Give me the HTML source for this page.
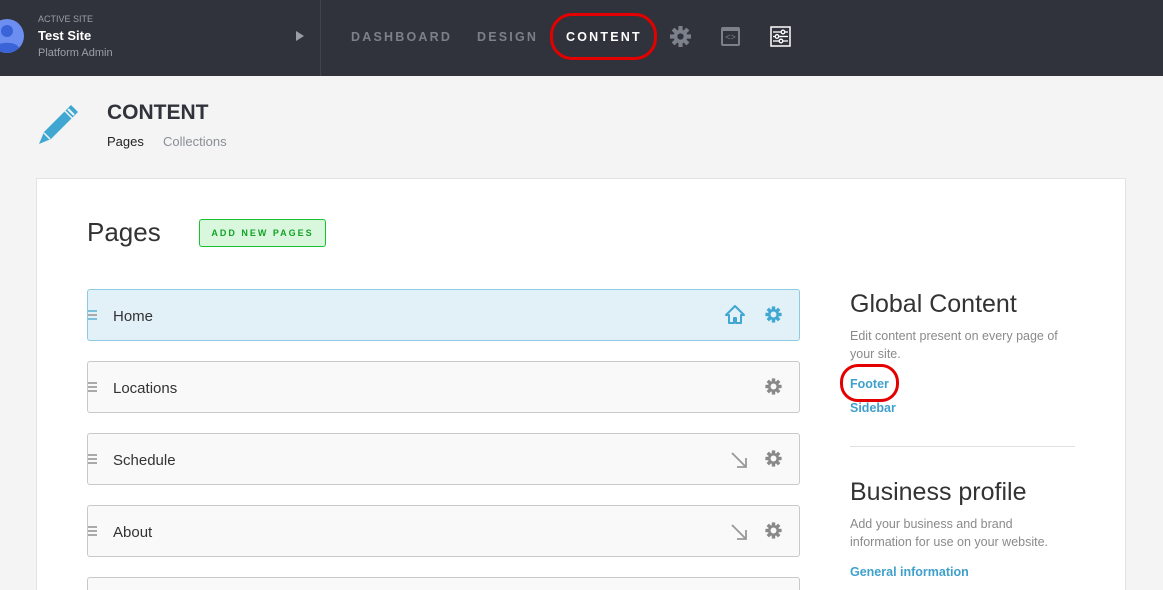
<!DOCTYPE html>
<html style="height:590px;overflow:hidden"><head><style>
*{box-sizing:border-box;margin:0;padding:0}
body{width:1163px;height:590px;overflow:hidden;background:#f4f4f4;font-family:"Liberation Sans",sans-serif;position:relative}
.hdr{position:absolute;left:0;top:0;width:1163px;height:76px;background:#30333b}
.abs{position:absolute}
.nav{position:absolute;top:30px;font-size:12.5px;font-weight:bold;letter-spacing:2.2px;color:#7c808a}
.panel{position:absolute;left:36px;top:178px;width:1090px;height:412px;background:#fff;border:1px solid #e3e3e3;border-bottom:none}
.row{position:absolute;left:87px;width:713px;height:52px;background:#f9f9f9;border:1px solid #c9c9c9;border-radius:3px}
.row .t{position:absolute;left:25px;top:18px;font-size:15px;color:#333}
.row .h{position:absolute;left:0;top:20px;width:9px;height:10px;border-top:2px solid #aaa;border-bottom:2px solid #aaa}
.row .h:after{content:"";position:absolute;left:0;top:2px;width:9px;border-top:2px solid #aaa}
.gear{position:absolute;left:677px;top:16px}
.arr{position:absolute;left:642px;top:17px}
.link{position:absolute;left:850px;font-size:12.5px;font-weight:bold;color:#3fa0cc}
.grey{color:#8a8a8a;font-size:12.5px;line-height:18px}
</style></head><body>
<div class="hdr">
 <svg class="abs" style="left:-10px;top:18px" width="34" height="36" viewBox="0 0 34 36"><circle cx="17" cy="18" r="17" fill="#6b8ef0"/><circle cx="17" cy="13" r="6" fill="#3b63d8"/><path d="M5 30c2-7 22-7 24 0a17 17 0 0 1-24 0z" fill="#3b63d8"/></svg>
 <div class="abs" style="left:38px;top:14px;font-size:9px;color:#9a9ea6">ACTIVE SITE</div>
 <div class="abs" style="left:38px;top:28px;font-size:13px;font-weight:bold;color:#fff">Test Site</div>
 <div class="abs" style="left:38px;top:47px;font-size:11px;color:#9a9ea6">Platform Admin</div>
 <div class="abs" style="left:296px;top:31px;width:0;height:0;border-left:8px solid #9a9ea6;border-top:5px solid transparent;border-bottom:5px solid transparent"></div>
 <div class="abs" style="left:320px;top:0;width:1px;height:76px;background:#40444c"></div>
 <div class="nav" style="left:351px">DASHBOARD</div>
 <div class="nav" style="left:477px">DESIGN</div>
 <div class="nav" style="left:566px;color:#fff">CONTENT</div>
 <div class="abs" style="left:550px;top:13px;width:107px;height:47px;border:3px solid #e50000;border-radius:22px"></div>
 <svg class="abs" style="left:670px;top:26px" width="21" height="21" viewBox="-10 -10 20 20"><g fill="#7c808a"><circle r="6.5"/><rect x="-2" y="-10" width="4" height="20"/><rect x="-2" y="-10" width="4" height="20" transform="rotate(45)"/><rect x="-2" y="-10" width="4" height="20" transform="rotate(90)"/><rect x="-2" y="-10" width="4" height="20" transform="rotate(135)"/></g><circle r="3" fill="#30333b"/></svg>
 <div class="abs" style="left:721px;top:27px;width:19px;height:19px;border:2px solid #7c808a;border-radius:2px;border-top-width:4px;color:#7c808a;font-size:9px;text-align:center;line-height:12px">&lt;&gt;</div>
 <svg class="abs" style="left:770px;top:26px" width="21" height="21" viewBox="0 0 21 21"><rect x="1" y="1" width="19" height="19" fill="none" stroke="#fff" stroke-width="1.5"/><g stroke="#fff" stroke-width="1.3" fill="#30333b"><line x1="3" y1="6" x2="18" y2="6"/><line x1="3" y1="10.5" x2="18" y2="10.5"/><line x1="3" y1="15" x2="18" y2="15"/><circle cx="13" cy="6" r="1.8"/><circle cx="7" cy="10.5" r="1.8"/><circle cx="11" cy="15" r="1.8"/></g></svg>
</div>
<svg class="abs" style="left:38px;top:103px" width="42" height="42" viewBox="0 0 42 42"><path d="M33 2l7 7-27 27-12 5 5-12z" fill="#3fa7d2"/><path d="M6 30l6 6" stroke="#f4f4f4" stroke-width="1.5"/><path d="M27 8l7 7" stroke="#f4f4f4" stroke-width="1.5"/><path d="M30 6l6 6" stroke="#f4f4f4" stroke-width="2"/></svg>
<div class="abs" style="left:107px;top:101px;font-size:21px;font-weight:bold;color:#30333b">CONTENT</div>
<div class="abs" style="left:107px;top:134px;font-size:13px;color:#222">Pages</div>
<div class="abs" style="left:163px;top:134px;font-size:13px;color:#8a8e96">Collections</div>
<div class="panel"></div>
<div class="abs" style="left:87px;top:217px;font-size:26px;color:#333">Pages</div>
<div class="abs" style="left:199px;top:219px;width:127px;height:28px;background:#d9f7dd;border:1px solid #19c12e;border-radius:3px;font-size:9px;font-weight:bold;letter-spacing:2px;color:#13a326;text-align:center;line-height:26px">ADD NEW PAGES</div>

<div class="row" style="top:289px;background:#e2f0f8;border-color:#8ccbe1"><div class="h" style="border-color:#7cc0dc"></div><div class="t">Home</div>
 <svg class="abs" style="left:636px;top:14px" width="22" height="21" viewBox="0 0 22 21"><path d="M11 2L2 11h3v8h5v-5h2v5h5v-8h3z" fill="none" stroke="#3fa7d2" stroke-width="2" stroke-linejoin="round"/></svg>
 <svg class="gear" width="17" height="17" viewBox="-10 -10 20 20"><g fill="#3fa7d2"><circle r="6.5"/><rect x="-2" y="-9.5" width="4" height="19"/><rect x="-2" y="-9.5" width="4" height="19" transform="rotate(45)"/><rect x="-2" y="-9.5" width="4" height="19" transform="rotate(90)"/><rect x="-2" y="-9.5" width="4" height="19" transform="rotate(135)"/></g><circle r="3.5" fill="#e2f0f8"/></svg></div>

<div class="row" style="top:361px"><div class="h"></div><div class="t">Locations</div>
 <svg class="gear" width="17" height="17" viewBox="-10 -10 20 20"><g fill="#888"><circle r="6.5"/><rect x="-2" y="-9.5" width="4" height="19"/><rect x="-2" y="-9.5" width="4" height="19" transform="rotate(45)"/><rect x="-2" y="-9.5" width="4" height="19" transform="rotate(90)"/><rect x="-2" y="-9.5" width="4" height="19" transform="rotate(135)"/></g><circle r="3.5" fill="#f9f9f9"/></svg></div>

<div class="row" style="top:433px"><div class="h"></div><div class="t">Schedule</div>
 <svg class="arr" width="18" height="18" viewBox="0 0 18 18"><path d="M2 2l14 14M16 7v9H7" fill="none" stroke="#999" stroke-width="1.8"/></svg>
 <svg class="gear" width="17" height="17" viewBox="-10 -10 20 20"><g fill="#888"><circle r="6.5"/><rect x="-2" y="-9.5" width="4" height="19"/><rect x="-2" y="-9.5" width="4" height="19" transform="rotate(45)"/><rect x="-2" y="-9.5" width="4" height="19" transform="rotate(90)"/><rect x="-2" y="-9.5" width="4" height="19" transform="rotate(135)"/></g><circle r="3.5" fill="#f9f9f9"/></svg></div>

<div class="row" style="top:505px"><div class="h"></div><div class="t">About</div>
 <svg class="arr" width="18" height="18" viewBox="0 0 18 18"><path d="M2 2l14 14M16 7v9H7" fill="none" stroke="#999" stroke-width="1.8"/></svg>
 <svg class="gear" width="17" height="17" viewBox="-10 -10 20 20"><g fill="#888"><circle r="6.5"/><rect x="-2" y="-9.5" width="4" height="19"/><rect x="-2" y="-9.5" width="4" height="19" transform="rotate(45)"/><rect x="-2" y="-9.5" width="4" height="19" transform="rotate(90)"/><rect x="-2" y="-9.5" width="4" height="19" transform="rotate(135)"/></g><circle r="3.5" fill="#f9f9f9"/></svg></div>

<div class="row" style="top:577px;height:13px;border-bottom:none;border-radius:3px 3px 0 0"></div>

<div class="abs" style="left:850px;top:290px;font-size:25px;color:#333">Global Content</div>
<div class="abs grey" style="left:850px;top:327px;width:230px">Edit content present on every page of your site.</div>
<div class="link" style="top:377px">Footer</div>
<div class="abs" style="left:840px;top:364px;width:59px;height:38px;border:3px solid #e50000;border-radius:18px"></div>
<div class="link" style="top:401px">Sidebar</div>
<div class="abs" style="left:850px;top:446px;width:225px;height:1px;background:#e0e0e0"></div>
<div class="abs" style="left:850px;top:478px;font-size:25px;color:#333">Business profile</div>
<div class="abs grey" style="left:850px;top:515px;width:215px">Add your business and brand information for use on your website.</div>
<div class="link" style="top:565px">General information</div>
</body></html>
